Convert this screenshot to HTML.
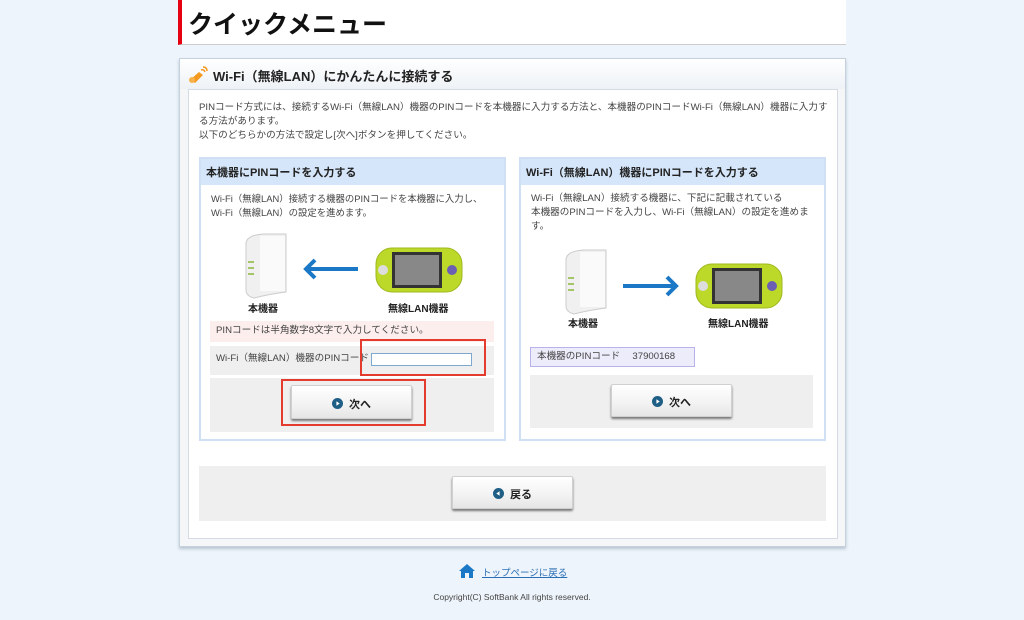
<!DOCTYPE html>
<html><head><meta charset="utf-8"><style>
*{margin:0;padding:0;box-sizing:border-box}
body{width:1024px;height:620px;background:#eef4fb;font-family:"Liberation Sans","Noto Sans CJK JP",sans-serif;color:#333;position:relative;overflow:hidden;font-size:10px}
.a{position:absolute}
.hdr{left:178px;top:0;width:668px;height:45px;background:#fff;border-left:4px solid #e60012;border-bottom:1px solid #ccc}
.hdr h1{font-size:25px;font-weight:bold;color:#111;position:absolute;left:6px;top:5px}
.panel{left:179px;top:58px;width:667px;height:489px;background:#f4f6f8;border:1px solid #c5d2de;box-shadow:0 2px 3px #b7c4d0}
.ptitle{left:180px;top:59px;width:665px;height:30px;background:linear-gradient(#fff,#eef2f6)}
.inner{left:188px;top:89px;width:650px;height:450px;background:#fff;border:1px solid #d4dbe2}
.card{background:#fff;border:2px solid #cfe0f5}
.ch{background:#d5e6fa;height:26px;font-weight:bold;font-size:11px;color:#222;padding:5px 0 0 5px}
.gray{background:#efefef}
.btn{background:linear-gradient(#fff,#f2f2f2 60%,#e6e6e6);border:1px solid #d0d0d0;border-radius:2px;box-shadow:0 2px 2px #777;font-weight:bold;font-size:11px;color:#222;text-align:center}
.dot{display:inline-block;width:11px;height:11px;vertical-align:-1px;margin-right:6px}
.lbl{font-weight:bold;font-size:10px;color:#222}
.t{font-size:9.6px;line-height:14px;color:#444}
</style></head><body>
<div class="a hdr"><h1>クイックメニュー</h1></div>
<div class="a panel"></div>
<div class="a ptitle">
<svg class="a" style="left:8px;top:7px" width="20" height="18" viewBox="0 0 20 18"><path d="M2 14 L11 6 L15 9 L7 17 Z" fill="#f39a1e"/><circle cx="4" cy="14" r="3" fill="#f7b24a"/><path d="M13 4 Q16 3 17 6 M15 1 Q19 1 19 5" stroke="#f39a1e" stroke-width="1.5" fill="none"/></svg>
<div class="a" style="left:33px;top:7px;font-size:13px;font-weight:bold;color:#222">Wi-Fi（無線LAN）にかんたんに接続する</div></div>
<div class="a inner"></div>
<div class="a t" style="left:199px;top:101px;width:630px">PINコード方式には、接続するWi-Fi（無線LAN）機器のPINコードを本機器に入力する方法と、本機器のPINコードWi-Fi（無線LAN）機器に入力する方法があります。<br>以下のどちらかの方法で設定し[次へ]ボタンを押してください。</div>

<div class="a card" style="left:199px;top:157px;width:307px;height:284px"><div class="ch">本機器にPINコードを入力する</div>
<div class="t" style="padding:7px 10px;white-space:nowrap;font-size:9.4px">Wi-Fi（無線LAN）接続する機器のPINコードを本機器に入力し、<br>Wi-Fi（無線LAN）の設定を進めます。</div></div>
<div class="a card" style="left:519px;top:157px;width:307px;height:284px"><div class="ch">Wi-Fi（無線LAN）機器にPINコードを入力する</div>
<div class="t" style="padding:7px 10px">Wi-Fi（無線LAN）接続する機器に、下記に記載されている<br>本機器のPINコードを入力し、Wi-Fi（無線LAN）の設定を進めます。</div></div>

<svg class="a" style="left:240px;top:232px" width="230" height="68">
<path d="M6 12 Q6 3 24 2 L46 2 L46 60 Q30 62 14 66 Q6 64 6 58 Z" fill="#f0f0f0" stroke="#ccc"/><rect x="20" y="4" width="25" height="55" fill="#fafafa"/>
<g stroke="#8ab83a" stroke-width="1.5"><line x1="8" y1="30" x2="14" y2="30"/><line x1="8" y1="36" x2="14" y2="36"/><line x1="8" y1="42" x2="14" y2="42"/></g>
<line x1="68" y1="37" x2="118" y2="37" stroke="#1b78c6" stroke-width="4"/><path d="M75 28 L66 37 L75 46" stroke="#1b78c6" stroke-width="4" fill="none"/>
<rect x="136" y="16" width="86" height="44" rx="16" fill="#bcd92a" stroke="#9fb81f"/><rect x="152" y="20" width="50" height="36" fill="#333"/><rect x="155" y="23" width="44" height="30" fill="#888"/><circle cx="143" cy="38" r="5" fill="#ddd"/><circle cx="212" cy="38" r="5" fill="#6a5fb2"/>
</svg>
<div class="a lbl" style="left:248px;top:300px">本機器</div>
<div class="a lbl" style="left:388px;top:300px">無線LAN機器</div>
<div class="a t" style="left:210px;top:321px;width:284px;height:21px;background:#fdeeee;padding:3px 6px">PINコードは半角数字8文字で入力してください。</div>
<div class="a gray t" style="left:210px;top:346px;width:284px;height:29px;padding:6px 6px">Wi-Fi（無線LAN）機器のPINコード</div>
<div class="a" style="left:371px;top:353px;width:101px;height:13px;border:1px solid #7fa8d0;background:#fff"></div>
<div class="a" style="left:360px;top:339px;width:126px;height:37px;border:2px solid #e43b2f"></div>
<div class="a gray" style="left:210px;top:378px;width:284px;height:54px"></div>
<div class="a btn" style="left:291px;top:385px;width:121px;height:34px;padding-top:10px"><svg class="dot" viewBox="0 0 10 10"><circle cx="5" cy="5" r="5" fill="#1f5f86"/><path d="M4 3 L7 5 L4 7Z" fill="#fff"/></svg>次へ</div>
<div class="a" style="left:281px;top:379px;width:145px;height:47px;border:2px solid #e43b2f"></div>

<svg class="a" style="left:560px;top:248px" width="230" height="68">
<path d="M6 12 Q6 3 24 2 L46 2 L46 60 Q30 62 14 66 Q6 64 6 58 Z" fill="#f0f0f0" stroke="#ccc"/><rect x="20" y="4" width="25" height="55" fill="#fafafa"/>
<g stroke="#8ab83a" stroke-width="1.5"><line x1="8" y1="30" x2="14" y2="30"/><line x1="8" y1="36" x2="14" y2="36"/><line x1="8" y1="42" x2="14" y2="42"/></g>
<line x1="63" y1="38" x2="114" y2="38" stroke="#1b78c6" stroke-width="4"/><path d="M107 29 L116 38 L107 47" stroke="#1b78c6" stroke-width="4" fill="none"/>
<rect x="136" y="16" width="86" height="44" rx="16" fill="#bcd92a" stroke="#9fb81f"/><rect x="152" y="20" width="50" height="36" fill="#333"/><rect x="155" y="23" width="44" height="30" fill="#888"/><circle cx="143" cy="38" r="5" fill="#ddd"/><circle cx="212" cy="38" r="5" fill="#6a5fb2"/>
</svg>
<div class="a lbl" style="left:568px;top:315px">本機器</div>
<div class="a lbl" style="left:708px;top:315px">無線LAN機器</div>
<div class="a t" style="left:530px;top:347px;width:165px;height:20px;background:#ececfb;border:1px solid #b7b2ec;padding:2px 6px">本機器のPINコード　 37900168</div>
<div class="a gray" style="left:530px;top:375px;width:283px;height:53px"></div>
<div class="a btn" style="left:611px;top:384px;width:121px;height:33px;padding-top:9px"><svg class="dot" viewBox="0 0 10 10"><circle cx="5" cy="5" r="5" fill="#1f5f86"/><path d="M4 3 L7 5 L4 7Z" fill="#fff"/></svg>次へ</div>

<div class="a gray" style="left:199px;top:466px;width:627px;height:55px"></div>
<div class="a btn" style="left:452px;top:476px;width:121px;height:33px;padding-top:9px"><svg class="dot" viewBox="0 0 10 10"><circle cx="5" cy="5" r="5" fill="#1f5f86"/><path d="M6 3 L3 5 L6 7Z" fill="#fff"/></svg>戻る</div>

<svg class="a" style="left:458px;top:563px" width="18" height="16" viewBox="0 0 18 16"><path d="M9 1 L1 8 L3 8 L3 15 L7 15 L7 10 L11 10 L11 15 L15 15 L15 8 L17 8 Z" fill="#1b78c6"/></svg>
<div class="a" style="left:482px;top:565px;font-size:9.5px;color:#2a6fb5;text-decoration:underline">トップページに戻る</div>
<div class="a" style="left:0;width:1024px;top:592px;text-align:center;font-size:8.5px;color:#444">Copyright(C) SoftBank All rights reserved.</div>
</body></html>
